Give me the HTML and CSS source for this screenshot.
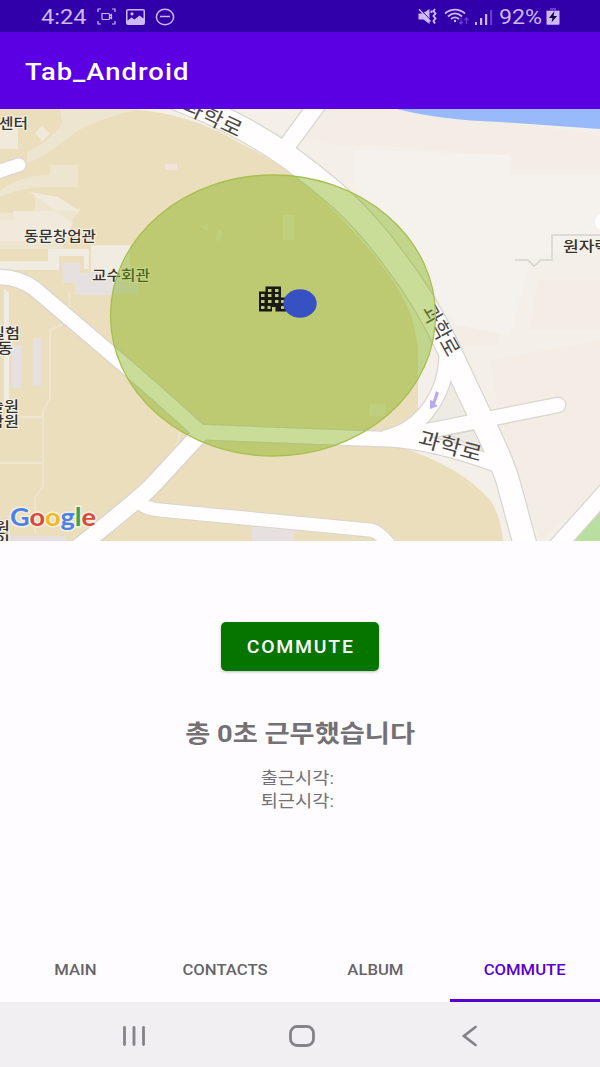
FILE: index.html
```html
<!DOCTYPE html>
<html lang="ko">
<head>
<meta charset="utf-8">
<meta name="viewport" content="width=device-width">
<title>Tab_Android</title>
<link rel="stylesheet" href="styles.css">
</head>
<body>
<div class="phone">
  <header class="status">
    <div class="status-left">
      <span class="clock">4:24</span>
      <svg class="status-icon" width="19" height="17" viewBox="0 0 19 17" fill="none" stroke="currentColor" stroke-width="1.200"><path d="M1 4V1h3M15 1h3v3M18 13v3h-3M4 16H1v-3M5 5.500h6.500a1 1 0 0 1 1 1v4a1 1 0 0 1-1 1H6a1 1 0 0 1-1-1zM12.500 8l2-1.500v4l-2-1.500"/></svg>
      <svg class="status-icon" width="19" height="16" viewBox="0 0 19 16"><path fill="currentColor" fill-rule="evenodd" d="M2 0h15a2 2 0 0 1 2 2v12a2 2 0 0 1-2 2H2a2 2 0 0 1-2-2V2a2 2 0 0 1 2-2zM1.500 1.500v10l4-3 3 2 5-4 4 3v-8zM6 3.200a1.600 1.600 0 1 1 0 3.200 1.600 1.600 0 0 1 0-3.200z"/></svg>
      <svg class="status-icon" width="20" height="18" viewBox="0 0 20 18" fill="none" stroke="currentColor" stroke-width="1.500"><ellipse cx="10" cy="9" rx="8.600" ry="7.800"/><path d="M5 8.500h10"/></svg>
    </div>
    <div class="status-right">
      <svg width="20" height="17" viewBox="0 0 20 17"><path fill="currentColor" d="M.5 5.500h4L11.500 1v15l-6-4.500h-5z"/><path d="M1.500 .3L13 12.500" stroke="#3100aa" stroke-width="1"/><path d="M1 1.200L12.500 13.500" stroke="currentColor" stroke-width="1.300"/><path d="M17 1l-1.500 2 2 2.500-2 2.500 2 2.500-2 2.500 1.500 2.500M13.500 2.500v2.500" fill="none" stroke="currentColor" stroke-width="1.900"/></svg>
      <svg width="25" height="17" viewBox="0 0 25 17" fill="none" stroke="currentColor" stroke-width="1.700"><path d="M1 5.500C7 .2 15 .2 21 5.500M4 8.500c4.500-4 9.500-4 14 0M7 11c2.500-2 5.500-2 8 0"/><circle cx="11" cy="13" r="1.200" fill="currentColor" stroke="none"/><path d="M17 10v6m-2-2l2 2 2-2M22.500 16v-6m-2 2l2-2 2 2" stroke="#6c38d0" stroke-width="1.200"/></svg>
      <svg width="18" height="16" viewBox="0 0 18 16"><path fill="currentColor" d="M0 13h2v3H0zM5 9h2.200v7H5zM10 5h2.200v11H10z"/><path fill="#6c38d0" d="M15 1h2.200v15H15z"/></svg>
      <span class="battery-text">92%</span>
      <svg width="14" height="17" viewBox="0 0 14 17"><path fill="#6c38d0" d="M4 0h6v2h3.500v2H.5V2H4z"/><path fill="currentColor" d="M.5 3h13v13a.8.800 0 0 1-.8.800H1.300A.8.800 0 0 1 .5 16z"/><path fill="#180040" d="M8.500 3L3 10h3.500L5.500 14.500 11 8H7.500z"/></svg>
    </div>
  </header>
  <div class="appbar"><h1 class="title">Tab_Android</h1></div>

  <svg class="map" viewBox="0 109 600 432" width="600" height="432">
    <defs>
      <g id="roads" fill="none" stroke-linejoin="round">
        <path class="w24" d="M165 94L190 104Q245 126 290 158C325 184 358 209 394 259Q426 300 449 350L482 420Q502 460 509 485L526 548"/>
        <path class="w18" d="M284 150L322 98"/>
        <path class="w15" d="M447 348C447 378 439 394 431 406Q413 432 384 438"/>
        <path class="w15" d="M200 432L300 436L382 439Q430 440 498 465"/>
        <path class="w15" stroke-linecap="round" d="M392 438L558 405"/>
        <path class="w15" d="M-5 277Q18 276 35 289L115 357Q155 391 201 433"/>
        <path class="w18" d="M201 433L150 488Q132 505 75 550"/>
        <path class="w13" d="M137 500Q144 509 160 510L370 530Q380 531 393 550"/>
        <path class="w13" stroke-linecap="round" d="M-8 174Q8 168 19 165"/>
        <path class="w18" d="M612 485L552 552"/>
      </g>
    </defs>
    <rect y="109" width="600" height="432" fill="#f4f0e9"/>
    <path fill="#f3ede6" d="M300 109h90l210 25v35H512v-12L370 145Q330 150 300 135zM490 360l110-20v150L540 541 500 430zM430 255h28v60h40v30h-40zM538 280h62v50h-70z"/>
    <path fill="#f5f1ec" d="M355 150l155 5v20h90v65l-70 20-20 75-55-10-50-75-50-65z"/>
    <path fill="#ebdebc" d="M0 109H130Q190 113 240 143Q300 174 325 202Q395 270 412 318L418 345V415L385 430 400 447Q460 466 490 500Q501 516 503 541H0z"/>
    <path fill="#eee5d1" d="M60 109h80Q100 118 75 132Q50 155 27 163V152Q55 138 62 122zM0 191Q20 175 50 175V165h28v22H48Q25 186 0 197zM13 213h22V196l45 14-12 17v15h-5v7H0v-37z"/>
    <path fill="#f1e9dc" d="M35 133l7-7 8 8-8 7zM0 123h18v26H0zM30 192l28 5 22 14-25-1zM13 211h42l18 12-8 18H0v-21h13z"/>
    <path fill="#f4e3dc" d="M165 164h12v6h-12z"/>
    <path fill="#f0ece1" d="M91 245h39v27H91zM48 249h41v20h-5v-13H59v14H0v-9h48zM4 288l5 5v110H4z"/>
    <path fill="#e6e0e1" d="M62 263h18v10h10v22H75V283H63zM90 272h48v23H90zM12 345h9v43h-9zM33 338h8v48h-8zM252 527h42v14h-42zM0 536h66v5H0z"/>
    <path fill="none" stroke="#efe5ce" stroke-width="2" d="M50 330v68l-7 13v75l-8 12v36M0 417h43M0 463h43M69 292Q74 325 49 330M105 518Q175 470 180 432"/>
    <path fill="#efe6d0" d="M283 215h11v25h-11zM200 227l8-3v7zM218 229l5 3-4 10-4-3zM369 404h16v12h-16z"/>
    <path fill="#98b9fa" d="M397 109Q440 120 500 122L600 129V109z"/>
    <path fill="#b9dfa0" d="M600 511L571 541h29z"/>
    <path fill="#eeebe4" stroke="#d6d4cc" d="M427 424L453 376 471 416zM450 435L476 430 484 452z"/>
    <path fill="none" stroke="#d5d3cf" stroke-width="1.500" d="M600 235H552V260H541L534 266 528 260H515"/>
    <use href="#roads" class="casing"/>
    <use href="#roads" class="surface"/>
    <circle cx="603" cy="222" r="8" fill="#fff"/>
    <path fill="#b6a9ee" d="M436 391l3 2-4 11 3 2-8 3v-9l3 1z"/>

    <g class="labels">
      <text x="-1" y="128" textLength="29" lengthAdjust="spacingAndGlyphs">센터</text>
      <text x="24" y="241" textLength="72" lengthAdjust="spacingAndGlyphs">동문창업관</text>
      <text x="92" y="280" textLength="58" lengthAdjust="spacingAndGlyphs">교수회관</text>
      <text x="-10" y="338" textLength="30" lengthAdjust="spacingAndGlyphs">실험</text>
      <text x="-3" y="353" textLength="16" lengthAdjust="spacingAndGlyphs">동</text>
      <text x="-11" y="411" textLength="30" lengthAdjust="spacingAndGlyphs">술원</text>
      <text x="-11" y="426" textLength="30" lengthAdjust="spacingAndGlyphs">학원</text>
      <text x="-6" y="532" textLength="16" lengthAdjust="spacingAndGlyphs">원</text>
      <text x="-6" y="546" textLength="16" lengthAdjust="spacingAndGlyphs">인</text>
      <text x="563" y="251" textLength="47" lengthAdjust="spacingAndGlyphs">원자력</text>
    </g>
    <g class="road-labels">
      <text transform="translate(181 111) rotate(25)" textLength="63" lengthAdjust="spacingAndGlyphs">과학로</text>
      <text transform="translate(421 310) rotate(61)" textLength="55" lengthAdjust="spacingAndGlyphs">과학로</text>
      <text transform="translate(417 445) rotate(15)" textLength="65" lengthAdjust="spacingAndGlyphs">과학로</text>
    </g>
    <ellipse cx="273" cy="315.500" rx="162.500" ry="140.500" fill="rgb(120 172 0 / .4)" stroke="#a8be50" stroke-width="1.300"/>
    <path fill="#191a14" fill-rule="evenodd" d="M265.500 286.500H281V297.500h5V311.500H275.500V307H272v4.500H259V291.500h6.500zM268 289v3h3.500v-3zM275 289v3h3.500v-3zM261 294v3h3.500v-3zM268 294v3h3.500v-3zM275 294v3h3.500v-3zM261 300v3h3.500v-3zM268 300v3h3.500v-3zM275 300v3h3.500v-3zM261 306v3h3.500v-3zM267.500 306v3h3v-3zM281 300v3h3v-3zM281 306v3h3v-3z"/>
    <ellipse cx="300" cy="303.500" rx="16.700" ry="14.300" fill="#3751c3"/>
    <text class="google" x="10" y="525.500" textLength="86" lengthAdjust="spacingAndGlyphs"><tspan fill="#4b81e8">G</tspan><tspan fill="#d9483c">o</tspan><tspan fill="#efb920">o</tspan><tspan fill="#4b81e8">g</tspan><tspan fill="#36a456">l</tspan><tspan fill="#d9483c">e</tspan></text>
  </svg>

  <main class="content">
    <button class="commute-button"><span>COMMUTE</span></button>
    <p class="total"><span>총 0초 근무했습니다</span></p>
    <div class="times"><p>출근시각:</p><p>퇴근시각:</p></div>
  </main>

  <nav class="tabs">
    <a class="tab"><span>MAIN</span></a>
    <a class="tab"><span>CONTACTS</span></a>
    <a class="tab"><span>ALBUM</span></a>
    <a class="tab active"><span>COMMUTE</span></a>
  </nav>

  <footer class="navbar">
    <svg width="24" height="22" viewBox="0 0 24 22"><path d="M2.500 2.500v17M12 2.500v17M21.500 2.500v17"/></svg>
    <svg class="home" width="28" height="24" viewBox="0 0 28 24"><rect x="2.500" y="2.500" width="23" height="19" rx="6.500"/></svg>
    <svg width="18" height="22" viewBox="0 0 18 22"><path d="M14.500 2L3 11l11.500 9"/></svg>
  </footer>
</div>
</body>
</html>
```
FILE: styles.css
```css
* { box-sizing: border-box; }
body { margin: 0; background: #fefcff; font-family: Roboto, "Noto Sans CJK KR", sans-serif; }
p, h1 { margin: 0; }
svg { display: block; flex: none; }
.phone { width: 600px; height: 1067px; display: flex; flex-direction: column; overflow: hidden; }

.status { height: 32px; flex: none; display: flex; justify-content: space-between; padding: 1px 40px 0 41px; background: #3100aa; color: #cdb9f3; }
.status-left, .status-right { display: flex; align-items: center; }
.status-left { gap: 10px; }
.status-right { gap: 6px; }
.clock { width: 46px; font-size: 20px; transform: scaleX(1.18); transform-origin: left; }
.battery-text { width: 41px; font-size: 20px; transform: scaleX(1.16); transform-origin: left; }

.appbar { height: 77px; flex: none; display: flex; align-items: center; padding: 2px 25px 0; background: #5a00e2; }
.title { color: #fff; font-size: 24px; font-weight: 500; letter-spacing: .9px; transform: scaleX(1.14); transform-origin: left; }

.map { flex: none; overflow: hidden; }
.w24 { stroke-width: var(--w24); }
.w18 { stroke-width: var(--w18); }
.w15 { stroke-width: var(--w15); }
.w13 { stroke-width: var(--w13); }
.casing { stroke: #d9d5cf; --w24: 25px; --w18: 19px; --w15: 17px; --w13: 15px; }
.surface { stroke: #fffdfe; --w24: 22.5px; --w18: 16.5px; --w15: 14.5px; --w13: 13px; }
.labels, .road-labels { font-family: "Noto Sans CJK KR", sans-serif; }
.labels { font-size: 14px; fill: #33322f; font-weight: 500; paint-order: stroke; stroke: #f8f3e8; stroke-width: 2px; }
.road-labels { font-size: 21px; fill: #4b4946; }
.google { font-family: Lato, sans-serif; font-size: 24px; font-weight: 700; paint-order: stroke; stroke: #fff8; stroke-width: 3px; }

.content { flex: 1; display: flex; flex-direction: column; align-items: center; padding-top: 81px; color: #737173; }
.commute-button { width: 158px; height: 49px; border: 0; border-radius: 5px; background: #067500; color: #fff; box-shadow: 0 1px 3px #0004; font: 500 17.5px Roboto, sans-serif; letter-spacing: 1.6px; }
.commute-button span { display: inline-block; padding-left: 1px; transform: scaleX(1.11); }
.total { margin-top: 45px; font-size: 23.5px; line-height: 36px; font-weight: 700; }
.total span { display: inline-block; transform: scaleX(1.16); }
.times { margin: 15px 5px 0 0; font-size: 17px; line-height: 23px; transform: scaleX(1.1); }

.tabs { height: 64px; flex: none; display: grid; grid-template-columns: repeat(4, 1fr); }
.tab { display: flex; align-items: center; justify-content: center; padding-top: 4px; border-bottom: 3px solid transparent; color: #666466; font-size: 14.5px; font-weight: 500; }
.tab span { transform: scaleX(1.15); }
.tab.active { color: #5800cf; border-color: #5600d5; }

.navbar { height: 65px; flex: none; display: flex; align-items: center; justify-content: space-between; padding: 3px 121px 0 122px; background: #f1eff2; }
.navbar svg { fill: none; stroke: #858387; stroke-width: 2.8; stroke-linecap: round; }
.navbar .home { margin-right: 4px; }
```
